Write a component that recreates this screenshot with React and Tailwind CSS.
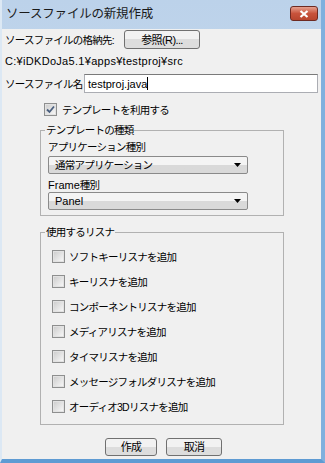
import React from 'react';

const FONT = { fontFamily: '"Liberation Sans", "Noto Sans CJK JP", sans-serif' };

const Check = ({ checked }) => (
  <span className="w-[13px] h-[13px] shrink-0 border border-[#8e8f8f] bg-white flex items-center justify-center">
    <span className="w-[11px] h-[11px] border border-[#e2e2e2] bg-gradient-to-br from-[#cfcfcf] to-[#f6f6f6] flex items-center justify-center">
      {checked && (
        <svg width="9" height="9" viewBox="0 0 9 9">
          <path d="M1 4.5 L3.5 7 L8 1.5" fill="none" stroke="#4a5f7e" strokeWidth="1.8" />
        </svg>
      )}
    </span>
  </span>
);

const Combo = ({ children }) => (
  <div className="h-[18px] w-[200px] rounded-[2px] border border-[#8a8a8a] bg-gradient-to-b from-[#f4f4f4] from-50% to-[#d9d9d9] to-50% flex items-center pl-[6px] pr-[6px] justify-between">
    <span className="whitespace-nowrap">{children}</span>
    <svg width="7" height="4" viewBox="0 0 7 4">
      <path d="M0 0 H7 L3.5 4 Z" fill="#000" />
    </svg>
  </div>
);

const Btn = ({ children, className }) => (
  <button className={`h-[18px] rounded-[3px] border border-[#707070] bg-gradient-to-b from-[#f2f2f2] from-50% to-[#dddddd] to-50% text-[11px] leading-[14px] text-black flex items-center justify-center whitespace-nowrap ${className}`}>
    {children}
  </button>
);

const listeners = [
  'ソフトキーリスナを追加',
  'キーリスナを追加',
  'コンポーネントリスナを追加',
  'メディアリスナを追加',
  'タイマリスナを追加',
  'メッセージフォルダリスナを追加',
  'オーディオ3Dリスナを追加',
];

export default function App() {
  return (
    <div style={FONT} className="w-[325px] h-[463px] flex flex-col bg-gradient-to-b from-[#bcd2ea] to-[#d4e3f2] border-l-[2px] border-l-[#dce8f4] border-r-[4px] border-r-[#7fb0de] border-b-[4px] border-b-[#5e9bd3]">
      <div className="h-[29px] shrink-0 flex items-center justify-between pl-[4px] pr-[3px]">
        <span className="text-[12.5px] tracking-[-0.2px] text-[#1a1a1a] -mt-[1px] whitespace-nowrap">ソースファイルの新規作成</span>
        <div className="w-[28px] h-[15px] -mt-[2px] rounded-[3px] border border-[#6d2a22] bg-gradient-to-b from-[#e5a08f] via-[#c8533c] to-[#b8452e] flex items-center justify-center">
          <svg width="10" height="8" viewBox="0 0 10 8">
            <path d="M1.5 1 L8.5 7 M8.5 1 L1.5 7" stroke="#fff" strokeWidth="2.2" />
          </svg>
        </div>
      </div>
      <div className="flex-1 bg-[#f0f0f0] px-[3px] text-[10.5px] leading-[14px] tracking-[-0.75px] text-black flex flex-col whitespace-nowrap">
        <div className="mt-[1px] h-[19px] flex items-center">
          <span className="w-[119px] shrink-0">ソースファイルの格納先:</span>
          <Btn className="w-[76px] h-[19px] tracking-[-0.6px]">参照(R)...</Btn>
        </div>
        <div className="mt-[5px] text-[11px] tracking-[0.3px]">C:¥iDKDoJa5.1¥apps¥testproj¥src</div>
        <div className="mt-[6px] h-[19px] flex items-center">
          <span className="w-[79px] shrink-0">ソースファイル名</span>
          <div className="flex-1 h-[19px] border border-[#abadb3] border-t-[#7a7a7a] bg-white flex items-center pl-[3px] text-[11px] tracking-normal">
            testproj.java<span className="w-px h-[13px] bg-black" />
          </div>
        </div>
        <label className="mt-[10px] h-[13px] flex items-center gap-[5px] ml-[39px]">
          <Check checked />
          <span>テンプレートを利用する</span>
        </label>

        <fieldset className="mt-[7px] ml-[35px] w-[244px] border border-[#b1b1b1] pl-[7px] pb-[5px]">
          <legend className="ml-[-3px] px-[1px] leading-[14px]">テンプレートの種類</legend>
          <div className="mt-[3px]">アプリケーション種別</div>
          <div className="mt-[2px]"><Combo>通常アプリケーション</Combo></div>
          <div className="mt-[4px]"><span className="text-[11px] tracking-normal">Frame</span>種別</div>
          <div><Combo><span className="text-[11px] tracking-normal">Panel</span></Combo></div>
        </fieldset>

        <fieldset className="mt-[9px] ml-[35px] w-[244px] border border-[#b1b1b1] pl-[11px] pb-[5px]">
          <legend className="ml-[-7px] px-[1px] leading-[14px]">使用するリスナ</legend>
          <div className="mt-[5px] flex flex-col">
            {listeners.map((l) => (
              <label key={l} className="h-[25px] flex items-center gap-[4px]">
                <Check />
                <span>{l}</span>
              </label>
            ))}
          </div>
        </fieldset>

        <div className="mt-[13px] flex pl-[100px] gap-[9px]">
          <Btn className="w-[52px]">作成</Btn>
          <Btn className="w-[56px]">取消</Btn>
        </div>
      </div>
    </div>
  );
}
